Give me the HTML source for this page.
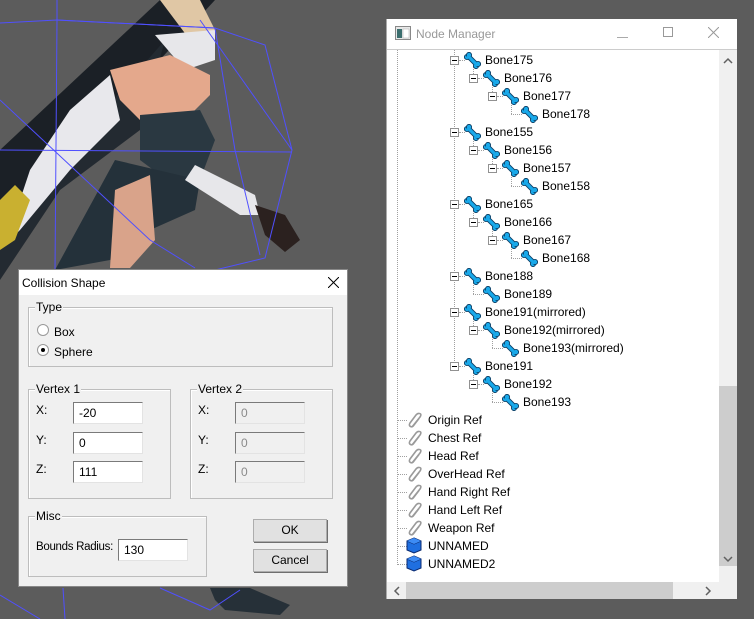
<!DOCTYPE html>
<html><head><meta charset="utf-8">
<style>
*{margin:0;padding:0;box-sizing:border-box}
body{width:754px;height:619px;overflow:hidden;background:#5c5c5c;position:relative;font-family:"Liberation Sans",sans-serif;font-size:12px;color:#000}
.a{position:absolute}
.gb{position:absolute;border:1px solid #bdbdbd;box-shadow:inset 1px 1px 0 #fff}
.gl{position:absolute;top:-8px;left:6px;background:#f0f0f0;padding:0 1px;font-size:12px;line-height:14px}
.ed{position:absolute;width:70px;height:22px;background:#fff;border:1px solid #7a7a7a;border-right-color:#e3e3e3;border-bottom-color:#e3e3e3;padding:3px 0 0 5px;font-size:12px}
.ed.d{background:#f0f0f0;color:#8a8a8a}
.btn{position:absolute;width:74px;height:23px;background:#e1e1e1;border:1px solid #adadad;text-align:center;line-height:21px;box-shadow:1px 1px 0 #6f6f6f}
.t{position:absolute;font-size:12px;line-height:14px;white-space:nowrap}
.bx{position:absolute;width:9px;height:9px;border:1px solid #919191;background:#fff}
.bx:after{content:"";position:absolute;left:1px;top:3px;width:5px;height:1px;background:#000}
.vl{position:absolute;border-left:1px dotted #a0a0a0;width:0}
.hl{position:absolute;border-top:1px dotted #a0a0a0;height:0}
.ic{position:absolute;width:17px;height:17px}
</style></head><body>

<svg class="a" style="left:0;top:0" width="754" height="619">
<polygon points="0,150 160,0 215,0 40,190 0,230" fill="#1b2026"/>
<polygon points="0,230 130,80 165,40 140,130 60,190 0,280" fill="#232a31"/>
<polygon points="160,0 200,0 215,30 190,40" fill="#e0c7a5"/>
<polygon points="155,35 215,30 215,60 185,70" fill="#e7e7ea"/>
<polygon points="110,70 170,55 210,75 210,95 190,115 140,120 120,100" fill="#e4a88c"/>
<polygon points="70,110 110,75 120,120 70,170 20,230 5,245 30,170" fill="#e8e8ec"/>
<polygon points="140,115 200,110 215,140 200,180 160,175 140,160" fill="#2a3841"/>
<polygon points="115,160 200,180 195,210 150,230 110,260 55,270" fill="#24313a"/>
<polygon points="115,190 150,175 155,240 130,268 110,268" fill="#d9a38a"/>
<polygon points="195,165 255,195 260,215 240,215 185,180" fill="#e7e7ea"/>
<polygon points="255,205 285,215 300,240 285,252 265,235" fill="#2b211f"/>
<polygon points="0,200 15,185 30,200 15,240 0,250" fill="#c9b030"/>
<polygon points="210,588 250,588 290,605 280,615 225,610 215,600" fill="#263038"/>
<g stroke="#5050ff" stroke-width="1" fill="none">
<polyline points="0,23 57,20 215,28 265,45 292,150 265,258 215,270 170,278"/>
<polyline points="57,0 57,20 55,270"/>
<polyline points="0,150 292,152"/>
<polyline points="0,100 150,240 195,268"/>
<polyline points="57,20 215,28 235,150 260,255"/>
<polyline points="200,20 292,150"/>
<polyline points="0,595 40,619"/><polyline points="63,588 65,619"/>
<polyline points="160,588 210,610 240,590"/>
</g>
</svg>

<div class="a" style="left:386px;top:19px;width:351px;height:580px;background:#fff;border:1px solid #aaa;border-top:none">
  <div class="a" style="left:0;top:0;width:350px;height:30px;background:#fff"></div>
  <svg class="a" style="left:8px;top:7px" width="16" height="14"><rect x="0.5" y="0.5" width="15" height="13" fill="#e8e8e8" stroke="#888"/><rect x="2" y="3" width="5" height="9" fill="#3b6e6e"/><rect x="8" y="3" width="6" height="9" fill="#fff" stroke="#aaa" stroke-width=".5"/></svg>
  <div class="t" style="left:29px;top:8px;color:#999;font-size:12px">Node Manager</div>
  <div class="a" style="left:230px;top:18px;width:11px;height:1px;background:#aaa"></div>
  <div class="a" style="left:276px;top:8px;width:10px;height:10px;border:1px solid #999"></div>
  <svg class="a" style="left:321px;top:8px" width="11" height="11"><path d="M0 0L11 11M11 0L0 11" stroke="#999" stroke-width="1"/></svg>
  <div class="a" style="left:0;top:30px;width:350px;height:1px;background:#ccc"></div>
  <div class="a" style="left:332px;top:31px;width:18px;height:532px;background:#f0f0f0"></div>
  <div class="a" style="left:332px;top:367px;width:18px;height:180px;background:#cdcdcd"></div>
  <svg class="a" style="left:336px;top:38px" width="10" height="8"><path d="M1 6L5 2L9 6" stroke="#606060" stroke-width="1.5" fill="none"/></svg>
  <svg class="a" style="left:336px;top:536px" width="10" height="8"><path d="M1 2L5 6L9 2" stroke="#606060" stroke-width="1.5" fill="none"/></svg>
  <div class="a" style="left:0;top:563px;width:350px;height:17px;background:#f0f0f0"></div>
  <div class="a" style="left:19px;top:563px;width:267px;height:17px;background:#cdcdcd"></div>
  <svg class="a" style="left:6px;top:567px" width="8" height="10"><path d="M6 1L2 5L6 9" stroke="#606060" stroke-width="1.5" fill="none"/></svg>
  <svg class="a" style="left:317px;top:567px" width="8" height="10"><path d="M2 1L6 5L2 9" stroke="#606060" stroke-width="1.5" fill="none"/></svg>
</div>

<svg width="0" height="0" style="position:absolute">
<defs>
<g id="bone"><line x1="4.5" y1="4.5" x2="12.5" y2="12.5" stroke="#0c3f66" stroke-width="5" stroke-linecap="round"/>
<circle cx="3" cy="5" r="2.6" fill="#19a9ea" stroke="#0c3f66" stroke-width=".9"/><circle cx="5" cy="3" r="2.6" fill="#19a9ea" stroke="#0c3f66" stroke-width=".9"/>
<circle cx="12" cy="14" r="2.6" fill="#19a9ea" stroke="#0c3f66" stroke-width=".9"/><circle cx="14" cy="12" r="2.6" fill="#19a9ea" stroke="#0c3f66" stroke-width=".9"/>
<line x1="4.5" y1="4.5" x2="12.5" y2="12.5" stroke="#19a9ea" stroke-width="3.2" stroke-linecap="round"/></g>
<g id="clip"><path d="M5 15L13 5Q15 2 12.5 1.5Q10.5 1 9 3L3 11Q1.5 13.5 3.5 14.5Q5.5 15.5 7 13L12 6.5" stroke="#9a9a9a" stroke-width="1.6" fill="none"/></g>
<g id="cube"><polygon points="8,1 15,4 15,13 8,16 1,13 1,4" fill="#1f6fe0" stroke="#0a2a70" stroke-width="1"/><polyline points="1,4 8,7 15,4 M8,7 8,16" stroke="#0a2a70" fill="none"/><polygon points="8,1 15,4 8,7 1,4" fill="#3d8cf5"/></g>
</defs></svg>

<div class="vl" style="left:397px;top:50px;height:515px"></div>
<div class="vl" style="left:454px;top:50px;height:317px"></div>
<div class="vl" style="left:473px;top:66px;height:12px"></div>
<div class="vl" style="left:492px;top:84px;height:12px"></div>
<div class="vl" style="left:511px;top:102px;height:12px"></div>
<div class="vl" style="left:473px;top:138px;height:12px"></div>
<div class="vl" style="left:492px;top:156px;height:12px"></div>
<div class="vl" style="left:511px;top:174px;height:12px"></div>
<div class="vl" style="left:473px;top:210px;height:12px"></div>
<div class="vl" style="left:492px;top:228px;height:12px"></div>
<div class="vl" style="left:511px;top:246px;height:12px"></div>
<div class="vl" style="left:473px;top:282px;height:12px"></div>
<div class="vl" style="left:473px;top:318px;height:12px"></div>
<div class="vl" style="left:492px;top:336px;height:12px"></div>
<div class="vl" style="left:473px;top:372px;height:12px"></div>
<div class="vl" style="left:492px;top:390px;height:12px"></div>

<div class="bx" style="left:450px;top:56px"></div><div class="hl" style="left:459px;top:60px;width:6px"></div><svg class="ic" style="left:464px;top:52px"><use href="#bone"/></svg><div class="t" style="left:485px;top:53px">Bone175</div>
<div class="bx" style="left:469px;top:74px"></div><div class="hl" style="left:478px;top:78px;width:6px"></div><svg class="ic" style="left:483px;top:70px"><use href="#bone"/></svg><div class="t" style="left:504px;top:71px">Bone176</div>
<div class="bx" style="left:488px;top:92px"></div><div class="hl" style="left:497px;top:96px;width:6px"></div><svg class="ic" style="left:502px;top:88px"><use href="#bone"/></svg><div class="t" style="left:523px;top:89px">Bone177</div>
<div class="hl" style="left:511px;top:114px;width:11px"></div><svg class="ic" style="left:521px;top:106px"><use href="#bone"/></svg><div class="t" style="left:542px;top:107px">Bone178</div>

<div class="bx" style="left:450px;top:128px"></div><div class="hl" style="left:459px;top:132px;width:6px"></div><svg class="ic" style="left:464px;top:124px"><use href="#bone"/></svg><div class="t" style="left:485px;top:125px">Bone155</div>
<div class="bx" style="left:469px;top:146px"></div><div class="hl" style="left:478px;top:150px;width:6px"></div><svg class="ic" style="left:483px;top:142px"><use href="#bone"/></svg><div class="t" style="left:504px;top:143px">Bone156</div>
<div class="bx" style="left:488px;top:164px"></div><div class="hl" style="left:497px;top:168px;width:6px"></div><svg class="ic" style="left:502px;top:160px"><use href="#bone"/></svg><div class="t" style="left:523px;top:161px">Bone157</div>
<div class="hl" style="left:511px;top:186px;width:11px"></div><svg class="ic" style="left:521px;top:178px"><use href="#bone"/></svg><div class="t" style="left:542px;top:179px">Bone158</div>

<div class="bx" style="left:450px;top:200px"></div><div class="hl" style="left:459px;top:204px;width:6px"></div><svg class="ic" style="left:464px;top:196px"><use href="#bone"/></svg><div class="t" style="left:485px;top:197px">Bone165</div>
<div class="bx" style="left:469px;top:218px"></div><div class="hl" style="left:478px;top:222px;width:6px"></div><svg class="ic" style="left:483px;top:214px"><use href="#bone"/></svg><div class="t" style="left:504px;top:215px">Bone166</div>
<div class="bx" style="left:488px;top:236px"></div><div class="hl" style="left:497px;top:240px;width:6px"></div><svg class="ic" style="left:502px;top:232px"><use href="#bone"/></svg><div class="t" style="left:523px;top:233px">Bone167</div>
<div class="hl" style="left:511px;top:258px;width:11px"></div><svg class="ic" style="left:521px;top:250px"><use href="#bone"/></svg><div class="t" style="left:542px;top:251px">Bone168</div>

<div class="bx" style="left:450px;top:272px"></div><div class="hl" style="left:459px;top:276px;width:6px"></div><svg class="ic" style="left:464px;top:268px"><use href="#bone"/></svg><div class="t" style="left:485px;top:269px">Bone188</div>
<div class="hl" style="left:473px;top:294px;width:11px"></div><svg class="ic" style="left:483px;top:286px"><use href="#bone"/></svg><div class="t" style="left:504px;top:287px">Bone189</div>

<div class="bx" style="left:450px;top:308px"></div><div class="hl" style="left:459px;top:312px;width:6px"></div><svg class="ic" style="left:464px;top:304px"><use href="#bone"/></svg><div class="t" style="left:485px;top:305px">Bone191(mirrored)</div>
<div class="bx" style="left:469px;top:326px"></div><div class="hl" style="left:478px;top:330px;width:6px"></div><svg class="ic" style="left:483px;top:322px"><use href="#bone"/></svg><div class="t" style="left:504px;top:323px">Bone192(mirrored)</div>
<div class="hl" style="left:492px;top:348px;width:11px"></div><svg class="ic" style="left:502px;top:340px"><use href="#bone"/></svg><div class="t" style="left:523px;top:341px">Bone193(mirrored)</div>

<div class="bx" style="left:450px;top:362px"></div><div class="hl" style="left:459px;top:366px;width:6px"></div><svg class="ic" style="left:464px;top:358px"><use href="#bone"/></svg><div class="t" style="left:485px;top:359px">Bone191</div>
<div class="bx" style="left:469px;top:380px"></div><div class="hl" style="left:478px;top:384px;width:6px"></div><svg class="ic" style="left:483px;top:376px"><use href="#bone"/></svg><div class="t" style="left:504px;top:377px">Bone192</div>
<div class="hl" style="left:492px;top:402px;width:11px"></div><svg class="ic" style="left:502px;top:394px"><use href="#bone"/></svg><div class="t" style="left:523px;top:395px">Bone193</div>

<div class="hl" style="left:397px;top:420px;width:10px"></div><svg class="ic" style="left:407px;top:412px"><use href="#clip"/></svg><div class="t" style="left:428px;top:413px">Origin Ref</div>
<div class="hl" style="left:397px;top:438px;width:10px"></div><svg class="ic" style="left:407px;top:430px"><use href="#clip"/></svg><div class="t" style="left:428px;top:431px">Chest Ref</div>
<div class="hl" style="left:397px;top:456px;width:10px"></div><svg class="ic" style="left:407px;top:448px"><use href="#clip"/></svg><div class="t" style="left:428px;top:449px">Head Ref</div>
<div class="hl" style="left:397px;top:474px;width:10px"></div><svg class="ic" style="left:407px;top:466px"><use href="#clip"/></svg><div class="t" style="left:428px;top:467px">OverHead Ref</div>
<div class="hl" style="left:397px;top:492px;width:10px"></div><svg class="ic" style="left:407px;top:484px"><use href="#clip"/></svg><div class="t" style="left:428px;top:485px">Hand Right Ref</div>
<div class="hl" style="left:397px;top:510px;width:10px"></div><svg class="ic" style="left:407px;top:502px"><use href="#clip"/></svg><div class="t" style="left:428px;top:503px">Hand Left Ref</div>
<div class="hl" style="left:397px;top:528px;width:10px"></div><svg class="ic" style="left:407px;top:520px"><use href="#clip"/></svg><div class="t" style="left:428px;top:521px">Weapon Ref</div>
<div class="hl" style="left:397px;top:546px;width:10px"></div><svg class="ic" style="left:406px;top:537px"><use href="#cube"/></svg><div class="t" style="left:428px;top:539px">UNNAMED</div>
<div class="hl" style="left:397px;top:564px;width:10px"></div><svg class="ic" style="left:406px;top:555px"><use href="#cube"/></svg><div class="t" style="left:428px;top:557px">UNNAMED2</div>

<div class="a" style="left:18px;top:269px;width:330px;height:318px;background:#f0f0f0;border:1px solid #888">
  <div class="a" style="left:0;top:0;width:328px;height:25px;background:#fff"></div>
  <div class="t" style="left:3px;top:6px;font-size:12px">Collision Shape</div>
  <svg class="a" style="left:309px;top:7px" width="11" height="11"><path d="M0 0L11 11M11 0L0 11" stroke="#000" stroke-width="1"/></svg>

  <div class="gb" style="left:9px;top:37px;width:305px;height:60px"><div class="gl">Type</div></div>
  <svg class="a" style="left:18px;top:54px" width="12" height="12"><circle cx="6" cy="6" r="5.5" fill="#fff" stroke="#999"/></svg>
  <div class="t" style="left:35px;top:55px">Box</div>
  <svg class="a" style="left:18px;top:74px" width="12" height="12"><circle cx="6" cy="6" r="5.5" fill="#fff" stroke="#999"/><circle cx="6" cy="6" r="2" fill="#000"/></svg>
  <div class="t" style="left:35px;top:75px">Sphere</div>

  <div class="gb" style="left:9px;top:119px;width:143px;height:110px"><div class="gl">Vertex 1</div></div>
  <div class="t" style="left:17px;top:133px">X:</div><div class="ed" style="left:54px;top:132px">-20</div>
  <div class="t" style="left:17px;top:163px">Y:</div><div class="ed" style="left:54px;top:162px">0</div>
  <div class="t" style="left:17px;top:192px">Z:</div><div class="ed" style="left:54px;top:191px">111</div>

  <div class="gb" style="left:171px;top:119px;width:143px;height:110px"><div class="gl">Vertex 2</div></div>
  <div class="t" style="left:179px;top:133px">X:</div><div class="ed d" style="left:216px;top:132px">0</div>
  <div class="t" style="left:179px;top:163px">Y:</div><div class="ed d" style="left:216px;top:162px">0</div>
  <div class="t" style="left:179px;top:192px">Z:</div><div class="ed d" style="left:216px;top:191px">0</div>

  <div class="gb" style="left:9px;top:246px;width:179px;height:61px"><div class="gl">Misc</div></div>
  <div class="t" style="left:17px;top:270px;font-size:11.5px;letter-spacing:-0.3px">Bounds Radius:</div><div class="ed" style="left:99px;top:269px">130</div>

  <div class="btn" style="left:234px;top:249px">OK</div>
  <div class="btn" style="left:234px;top:279px">Cancel</div>
</div>
</body></html>
